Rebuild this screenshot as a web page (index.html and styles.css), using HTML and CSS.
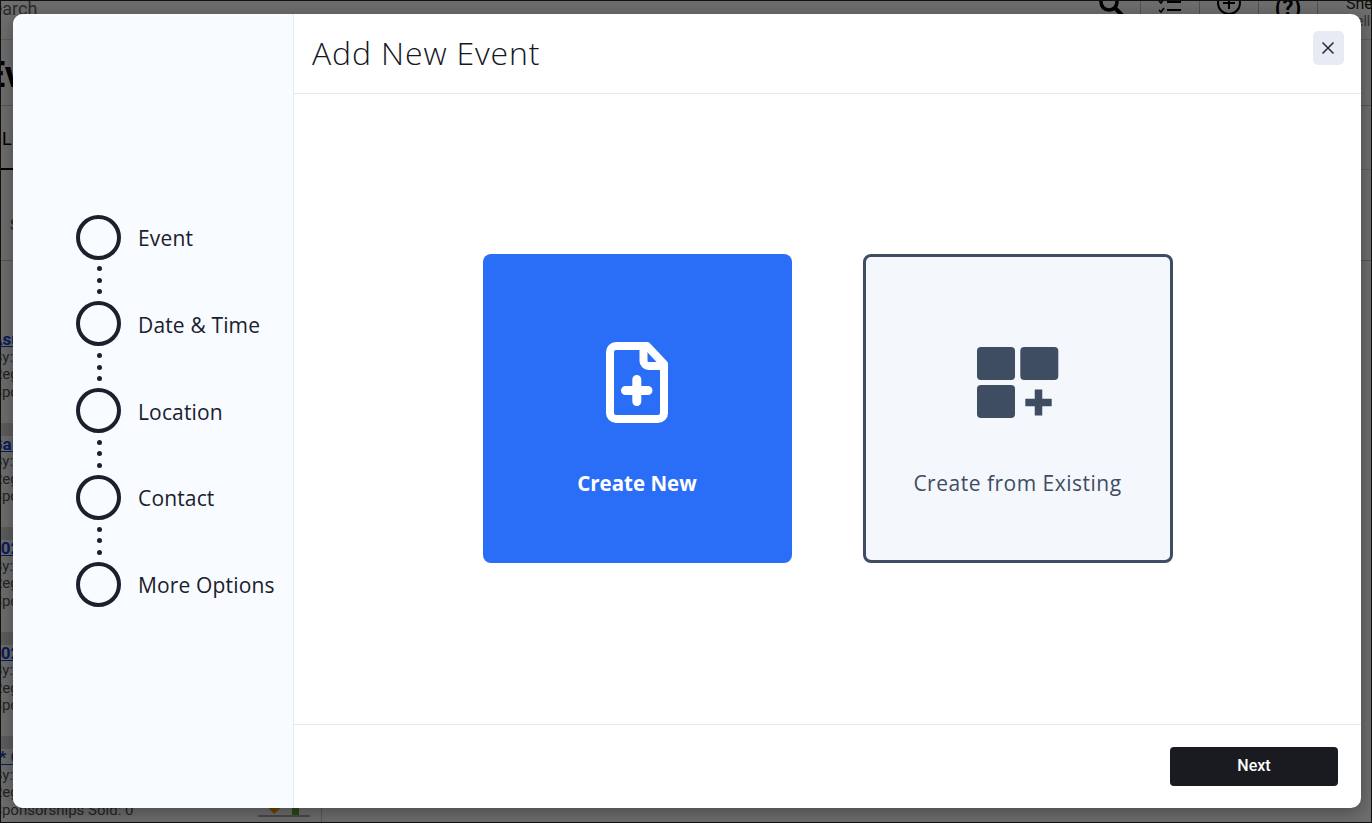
FILE: index.html
```html
<!DOCTYPE html>
<html>

<head>
    <meta charset="utf-8">
    <title>Add New Event</title>
    <link rel="stylesheet" href="styles.css">
</head>

<body>
    <!-- page behind the dialog -->
    <div class="page">
        <div class="topbar">
            <span class="search-text">Search</span>
            <div class="top-tools">
                <div class="tool">
                    <svg width="26" height="26" viewBox="0 0 26 26"><circle cx="11" cy="10" r="8" fill="none" stroke="#000" stroke-width="3.5"/><path d="M17 16l7 7" stroke="#000" stroke-width="4"/></svg>
                </div>
                <div class="tool">
                    <svg width="26" height="26" viewBox="0 0 26 26"><path d="M2 9l2 2 3-4M2 18l2 2 3-4" fill="none" stroke="#000" stroke-width="1.6"/><path d="M10 10h14M10 18h14" stroke="#000" stroke-width="2"/></svg>
                </div>
                <div class="tool">
                    <svg width="26" height="26" viewBox="0 0 26 26"><circle cx="13" cy="11" r="11" fill="none" stroke="#000" stroke-width="2"/><path d="M13 5v12M7 11h12" stroke="#000" stroke-width="2"/></svg>
                </div>
                <div class="tool tool-help">(?)</div>
                <div class="tool-user">Shelley<br><span class="user-sub">Hello</span></div>
            </div>
        </div>
        <div class="page-title">Events</div>
        <div class="page-tabs"><span class="tab-active">List</span></div>
        <div class="page-filter"><span class="filter-text">S</span></div>
        <div class="rows">
            <div class="row">
                <a class="row-link">Asur</a>
                <p>By: Team</p>
                <p>Registered: 0</p>
                <p>Sponsorships Sold: 0</p>
            </div>
            <div class="row">
                <a class="row-link">Gal</a>
                <p>By: Team</p>
                <p>Registered: 0</p>
                <p>Sponsorships Sold: 0</p>
            </div>
            <div class="row">
                <a class="row-link">2023</a>
                <p>By: Team</p>
                <p>Registered: 0</p>
                <p>Sponsorships Sold: 0</p>
            </div>
            <div class="row">
                <a class="row-link">2024</a>
                <p>By: Team</p>
                <p>Registered: 0</p>
                <p>Sponsorships Sold: 0</p>
            </div>
            <div class="row">
                <a class="row-link">** Copy</a>
                <p>By: Team</p>
                <p>Registered: 0</p>
                <div class="row-last">
                    <p>Sponsorships Sold: 0</p>
                    <svg class="row-chart" width="52" height="16" viewBox="0 0 52 16"><path d="M8 3h18l-10 9z" fill="#ff9f00"/><rect x="34" y="2" width="7" height="11" fill="#5fae2e"/><rect x="0" y="13" width="52" height="2" fill="#aaa"/></svg>
                </div>
            </div>
        </div>
    </div>

    <div class="overlay"></div>

    <div class="modal">
        <div class="sidebar">
            <div class="steps">
                <div class="step"><span class="step-circle"></span><span class="step-name">Event</span></div>
                <div class="step-dots"><i></i><i></i><i></i></div>
                <div class="step"><span class="step-circle"></span><span class="step-name">Date &amp; Time</span></div>
                <div class="step-dots"><i></i><i></i><i></i></div>
                <div class="step"><span class="step-circle"></span><span class="step-name">Location</span></div>
                <div class="step-dots"><i></i><i></i><i></i></div>
                <div class="step"><span class="step-circle"></span><span class="step-name">Contact</span></div>
                <div class="step-dots"><i></i><i></i><i></i></div>
                <div class="step"><span class="step-circle"></span><span class="step-name">More Options</span></div>
            </div>
        </div>
        <div class="main">
            <div class="main-head">
                <h2>Add New Event</h2>
                <button class="close-btn">
                    <svg width="14" height="14" viewBox="0 0 14 14"><path d="M1.5 1.5l11 11M12.5 1.5l-11 11" stroke="#2b303c" stroke-width="1.6"/></svg>
                </button>
            </div>
            <div class="main-body">
                <div class="card card-new">
                    <div class="card-icon">
                        <svg width="62" height="81" viewBox="0 0 62 81">
                            <path d="M10 4H41L58 22V71a6 6 0 0 1-6 6H10a6 6 0 0 1-6-6V10a6 6 0 0 1 6-6z" fill="none" stroke="#fff" stroke-width="8" stroke-linejoin="round"/>
                            <path d="M37.500 4V19a5 5 0 0 0 5 5H58" fill="none" stroke="#fff" stroke-width="8"/>
                            <path d="M30.800 37.500V59.500M19.500 48.500H42" stroke="#fff" stroke-width="9" stroke-linecap="round"/>
                        </svg>
                    </div>
                    <div class="card-name">Create New</div>
                </div>
                <div class="card card-existing">
                    <div class="card-icon">
                        <svg width="82" height="71" viewBox="0 0 82 71">
                            <rect x="0" y="0" width="38" height="33" rx="4" fill="#3f4d62"/>
                            <rect x="43.300" y="0" width="38" height="33" rx="4" fill="#3f4d62"/>
                            <rect x="0" y="38" width="38" height="33" rx="4" fill="#3f4d62"/>
                            <path d="M61.500 42.500V68.500M48.300 55.500H74.700" stroke="#3f4d62" stroke-width="7.500"/>
                        </svg>
                    </div>
                    <div class="card-name">Create from Existing</div>
                </div>
            </div>
            <div class="main-foot">
                <button class="next-btn">Next</button>
            </div>
        </div>
    </div>
</body>
</html>
```

FILE: styles.css
```css
* {
    margin: 0;
    padding: 0;
    box-sizing: border-box;
}
body {
    height: 823px;
    overflow: hidden;
    background: #fff;
    font-family: Roboto, "Liberation Sans", sans-serif;
}
/* page behind the dialog */
.page {
    height: 823px;
    overflow: hidden;
    color: #222;
}
.topbar {
    height: 40px;
    display: flex;
    justify-content: space-between;
    border-bottom: 1px solid #ddd;
}
.search-text {
    margin-left: -18px;
    margin-top: -2px;
    font-size: 18px;
    color: #666;
}
.top-tools {
    display: flex;
    height: 40px;
    margin-top: -8px;
}
.tool {
    width: 59px;
    display: flex;
    justify-content: center;
    border-right: 1px solid #bbb;
}
.tool-help {
    font-size: 22px;
    font-weight: 700;
    color: #000;
    padding-top: 3px;
}
.tool-user {
    width: 54px;
    padding: 3px 0 0 28px;
    font-size: 16px;
    line-height: 17px;
    white-space: nowrap;
    overflow: hidden;
}
.user-sub {
    font-size: 14px;
    color: #777;
}
.page-title {
    height: 66px;
    margin-left: -15px;
    padding-top: 14px;
    font-size: 36px;
    font-weight: 700;
    color: #000;
    border-bottom: 1px solid #ccc;
}
.page-tabs {
    height: 64px;
    border-bottom: 1px solid #ddd;
}
.tab-active {
    display: block;
    width: 60px;
    height: 64px;
    padding: 22px 0 0 2px;
    font-size: 18px;
    color: #000;
    border-bottom: 2px solid #000;
}
.page-filter {
    height: 91px;
    padding: 46px 0 0 10px;
    font-size: 15px;
    color: #555;
    border-bottom: 1px solid #ccc;
}
.rows {
    width: 322px;
    height: 600px;
    padding-top: 70px;
    border-right: 1px solid #ccc;
}
.row {
    height: 104.5px;
    margin-left: -7px;
    font-size: 15px;
    line-height: 17.500px;
    color: #555;
    background: #fff;
    border-bottom: 13px solid #d8d8d8;
}
.row:last-child {
    border-bottom: 0;
}
.row-link {
    display: block;
    margin-left: -2px;
    font-size: 17px;
    font-weight: 700;
    color: #1746d8;
    text-decoration: underline;
}
.row-last {
    display: flex;
    align-items: flex-start;
}
.row-chart {
    margin: 0 0 0 125px;
}
.overlay {
    position: absolute;
    top: 0;
    left: 0;
    width: 1372px;
    height: 823px;
    background: rgba(0, 0, 0, .57);
    border: 1px solid #111;
}
/* dialog */
.modal {
    position: absolute;
    top: 14px;
    left: 13px;
    width: 1348px;
    height: 794px;
    display: flex;
    border-radius: 10px;
    background: #fff;
    overflow: hidden;
    box-shadow: 0 4px 18px rgba(0, 0, 0, .35);
    font-family: "Open Sans", sans-serif;
}
.sidebar {
    width: 281px;
    display: flex;
    align-items: center;
    padding-left: 63px;
    padding-bottom: 1px;
    background: #f8fbff;
    border-right: 1px solid #e8ebf0;
}
.step {
    display: flex;
    align-items: center;
    gap: 17px;
}
.step-circle {
    width: 45px;
    height: 45px;
    border: 4px solid #1a202c;
    border-radius: 50%;
}
.step-name {
    margin-top: 2px;
    font-size: 21px;
    letter-spacing: .15px;
    color: #1a202c;
}
.step-dots {
    width: 45px;
    height: 41.750px;
    display: flex;
    flex-direction: column;
    align-items: center;
    justify-content: center;
    gap: 6.500px;
}
.step-dots i {
    width: 5px;
    height: 5px;
    margin-left: 1px;
    border-radius: 50%;
    background: #1a202c;
}
.main {
    flex: 1;
    display: flex;
    flex-direction: column;
}
.main-head {
    height: 80px;
    display: flex;
    justify-content: space-between;
    padding: 17px 17px 0 18px;
    border-bottom: 1px solid #e5e7eb;
}
.main-head h2 {
    margin-top: -1px;
    font-size: 32px;
    font-weight: 300;
    line-height: 45px;
    letter-spacing: .85px;
    color: #14181f;
}
.close-btn {
    width: 31px;
    height: 34px;
    display: flex;
    align-items: center;
    justify-content: center;
    padding: 0 2px 1px 0;
    border: 0;
    border-radius: 5px;
    background: #e8ebf3;
}
.main-body {
    flex: 1;
    display: flex;
    align-items: center;
    justify-content: center;
    gap: 71px;
    padding-bottom: 2px;
}
.card {
    width: 309px;
    height: 309px;
    display: flex;
    flex-direction: column;
    align-items: center;
    justify-content: center;
    padding-top: 22px;
    border-radius: 8px;
}
.card-new {
    background: #2a6df6;
    color: #fff;
}
.card-existing {
    width: 310px;
    background: #f4f7fb;
    border: 3px solid #3f4d62;
    color: #3f4d62;
}
.card-icon {
    height: 81px;
    display: flex;
    align-items: center;
}
.card-name {
    margin: 47px 0 -1px;
    font-size: 21px;
    line-height: 27px;
}
.card-new .card-name {
    font-size: 20.500px;
    font-weight: 700;
}
.card-existing .card-name {
    font-weight: 500;
    letter-spacing: .5px;
}
.main-foot {
    height: 84px;
    display: flex;
    justify-content: flex-end;
    padding: 22px 23px 0 0;
    border-top: 1px solid #e5e7eb;
}
.next-btn {
    width: 168px;
    height: 39px;
    padding-bottom: 2px;
    border: 0;
    border-radius: 4px;
    background: #1a1b20;
    color: #fff;
    font-family: Roboto, sans-serif;
    font-size: 16px;
    font-weight: 500;
}
```
